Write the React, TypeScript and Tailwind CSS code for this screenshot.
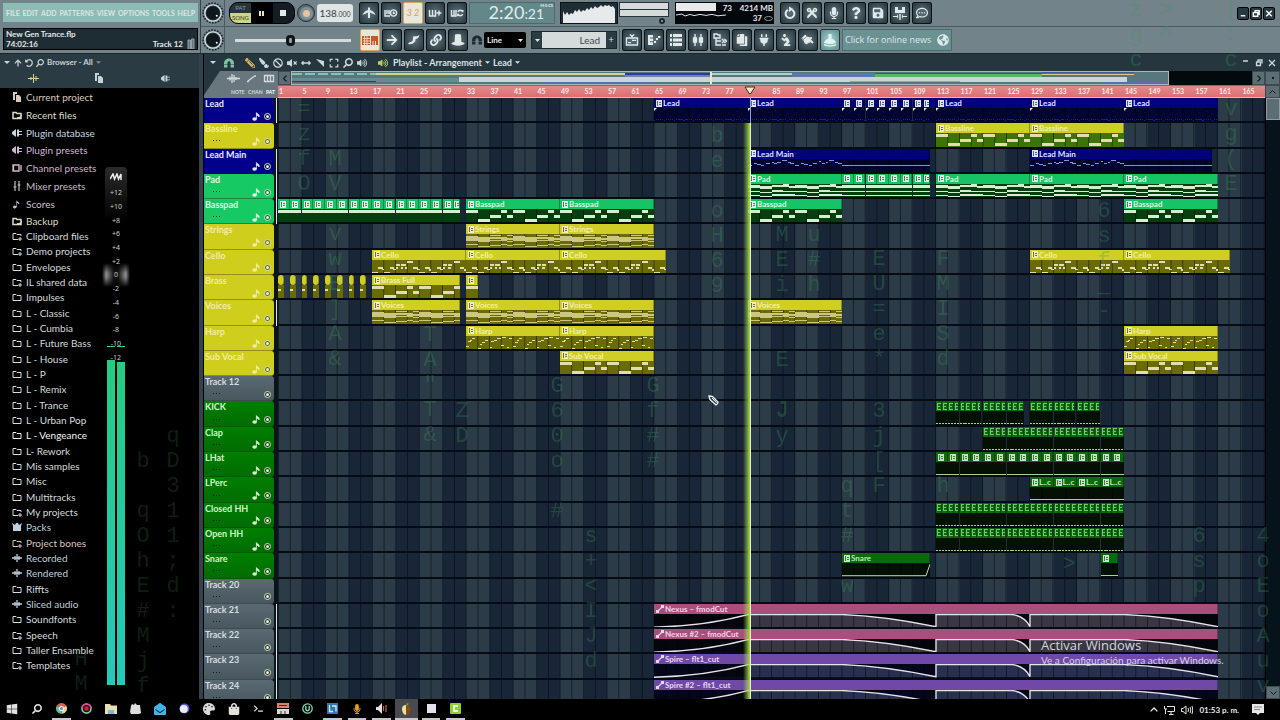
import React from "react";
import {
  FaLink, FaMagnet, FaMicrophone, FaQuestion, FaSave, FaPlug, FaCopy, FaPencilAlt, FaPaintBrush, FaBan,
  FaVolumeMute, FaArrowsAltH, FaExpand, FaSearch, FaVolumeUp, FaHandPointRight, FaGlobeAmericas, FaWindows,
  FaArrowUp, FaArrowRight, FaUndoAlt, FaCut, FaRegCommentDots,
  FaShoppingBag, FaTerminal, FaEnvelopeOpen, FaPalette, FaPray,
} from "react-icons/fa";

const BARS = 168;
const pct = (bars: number) => `${(bars / BARS) * 100}%`;

type Tone = "blue" | "yellow" | "olive" | "green" | "drum" | "gray" | "pink" | "violet";
type Art = "none" | "blocks" | "chords" | "cello" | "harp" | "pad" | "melody" | "lead" | "line" | "low" | "ticks" | "snare" | "hit" | "auto";
type Clip = { at: number; to: number; name?: string; tone: Tone; art: Art; icon?: boolean };

const run = (from: number, to: number, step: number, tone: Tone, art: Art, name?: string): Clip[] => {
  const out: Clip[] = [];
  for (let b = from; b < to; b += step) out.push({ at: b, to: Math.min(b + step, to), tone, art, name });
  return out;
};
const set = (name: string, tone: Tone, art: Art, spans: [number, number][]): Clip[] =>
  spans.map(([at, to]) => ({ at, to, name, tone, art }));

const HEAD: Record<Tone, string> = {
  blue: "bg-[#02027c] text-[#dfe2ff]",
  yellow: "bg-[#d0cd25] text-[#f2efb4]",
  olive: "bg-[#cbd026] text-[#f2efb4]",
  green: "bg-[#17c465] text-[#dcf8e2]",
  drum: "bg-[#0b6a0e] text-[#bfeabb]",
  gray: "bg-[#52626a] text-white",
  pink: "bg-[#a94e7d] text-[#f0d5e2]",
  violet: "bg-[#7048a6] text-[#e4d9f5]",
};
const BODY: Record<Tone, string> = {
  blue: "bg-[#02052f]",
  yellow: "bg-[#6a6b03]",
  olive: "bg-[#3d7404]",
  green: "bg-[#04400f]",
  drum: "bg-[#031003]",
  gray: "bg-black",
  pink: "bg-[#05060c]",
  violet: "bg-[#04061a]",
};

type Track = { name: string; tone: Tone; bar?: boolean; note?: boolean; dots?: boolean; clips: Clip[] };
const TRACKS: Track[] = [
  { name: "Lead", tone: "blue", bar: true, note: true, clips: [
    ...set("Lead", "blue", "lead", [[65, 81], [81, 97]]), ...run(97, 112, 2, "blue", "lead"),
    ...set("Lead", "blue", "lead", [[113, 129], [129, 145], [145, 161]]), { at: 112, to: 113, tone: "blue", art: "none", icon: false }] },
  { name: "Bassline", tone: "yellow", note: true, dots: true, clips: set("Bassline", "olive", "blocks", [[113, 129], [129, 145]]) },
  { name: "Lead Main", tone: "blue", bar: true, note: true, clips: set("Lead Main", "blue", "melody", [[81, 112], [129, 160]]) },
  { name: "Pad", tone: "green", bar: true, note: true, dots: true, clips: [
    ...set("Pad", "green", "pad", [[81, 97]]), ...run(97, 112, 2, "green", "pad"),
    ...set("Pad", "green", "pad", [[113, 129], [129, 145], [145, 161]])] },
  { name: "Basspad", tone: "green", bar: true, note: true, dots: true, clips: [
    ...run(1, 32, 2, "green", "line"), ...set("Basspad", "green", "blocks", [[33, 49], [49, 65], [81, 97], [145, 161]])] },
  { name: "Strings", tone: "yellow", note: true, clips: set("Strings", "yellow", "chords", [[33, 49], [49, 65]]) },
  { name: "Cello", tone: "yellow", note: true, clips: set("Cello", "yellow", "cello", [[17, 33], [33, 49], [49, 67], [129, 145], [145, 163]]) },
  { name: "Brass", tone: "yellow", note: true, clips: [
    ...[1, 3, 5, 7, 9, 11, 13, 15].map((at): Clip => ({ at, to: at + 1, tone: "yellow", art: "hit", icon: false })),
    ...set("Brass Full", "yellow", "blocks", [[17, 32]]), { at: 33, to: 35, tone: "yellow", art: "blocks" }] },
  { name: "Voices", tone: "yellow", bar: true, note: true, clips: set("Voices", "yellow", "chords", [[17, 32], [33, 49], [49, 65], [81, 97]]) },
  { name: "Harp", tone: "yellow", note: true, clips: set("Harp", "yellow", "harp", [[33, 49], [49, 65], [145, 161]]) },
  { name: "Sub Vocal", tone: "yellow", note: true, clips: set("Sub Vocal", "yellow", "blocks", [[49, 65], [145, 161]]) },
  { name: "Track 12", tone: "gray", dots: true, clips: [] },
  { name: "KICK", tone: "drum", note: true, dots: true, clips: [
    ...run(113, 120.6, 1, "drum", "ticks"), ...run(121, 128, 1, "drum", "ticks"),
    ...run(129, 136.6, 1, "drum", "ticks"), ...run(137, 141, 1, "drum", "ticks")] },
  { name: "Clap", tone: "drum", note: true, dots: true, clips: run(121, 145, 1, "drum", "ticks") },
  { name: "LHat", tone: "drum", note: true, dots: true, clips: run(113, 145, 2, "drum", "low") },
  { name: "LPerc", tone: "drum", note: true, dots: true, clips: run(129, 145, 4, "drum", "low", "L..c") },
  { name: "Closed HH", tone: "drum", note: true, dots: true, clips: run(113, 145, 1, "drum", "ticks") },
  { name: "Open HH", tone: "drum", note: true, dots: true, clips: run(113, 145, 1, "drum", "ticks") },
  { name: "Snare", tone: "drum", note: true, dots: true, clips: [
    { at: 97, to: 112, name: "Snare", tone: "drum", art: "snare" }, { at: 141, to: 144, tone: "drum", art: "low" }] },
  { name: "Track 20", tone: "gray", dots: true, clips: [] },
  { name: "Track 21", tone: "gray", bar: true, dots: true, clips: set("Nexus – fmodCut", "pink", "auto", [[65, 161]]) },
  { name: "Track 22", tone: "gray", bar: true, dots: true, clips: set("Nexus #2 – fmodCut", "pink", "auto", [[65, 161]]) },
  { name: "Track 23", tone: "gray", bar: true, dots: true, clips: set("Spire – flt1_cut", "violet", "auto", [[65, 161]]) },
  { name: "Track 24", tone: "gray", bar: true, dots: true, clips: set("Spire #2 – flt1_cut", "violet", "auto", [[65, 161]]) },
];

const TRACK_HEAD: Record<string, string> = {
  blue: "bg-[#00008a] text-[#e8eaff]",
  yellow: "bg-[#d0ce1c] text-[#f0eda6]",
  green: "bg-[#17c963] text-[#e2f7e2]",
  drum: "bg-linear-to-b from-[#007f00] to-[#016c03] text-[#d3f5cd]",
  gray: "bg-linear-to-b from-[#5a6a72] to-[#49585f] text-[#d4dee2]",
};

/* Note shapes: [start bar, length, y, height] within a 16-bar phrase, body is 14 units high. */
type Note = [number, number, number, number];
const PHRASES: Partial<Record<Art, Note[]>> = {
  blocks: [[0, 2, 1, 3], [2, 2, 11, 3], [4, 2, 6, 3], [6, 1, 1, 3], [7, 1, 6, 3], [8, 2, 1, 3], [10, 2, 11, 3], [12, 2, 6, 3], [14, 1, 1, 3], [15, 1, 6, 3]],
  chords: [[0, 2, 2, 5], [2, 2, 3, 5], [4, 2, 1, 1], [4, 2, 3, 2], [4, 2, 6, 1], [6, 1, 3, 4], [7, 1, 1, 1], [7, 1, 4, 2], [7, 1, 7, 1], [8, 2, 2, 5], [10, 2, 3, 5], [12, 2, 1, 1], [12, 2, 3, 2], [12, 2, 6, 1], [14, 1, 3, 4], [15, 1, 1, 1], [15, 1, 4, 2], [15, 1, 7, 1], [0, 2, 11, 1], [2, 2, 13, 1], [4, 2, 12, 1], [6, 1, 11, 1], [7, 1, 12, 1], [8, 2, 11, 1], [10, 2, 13, 1], [12, 2, 12, 1], [14, 1, 11, 1], [15, 1, 12, 1]],
  pad: [[0, 2, 1, 3], [2, 2, 2, 3], [4, 2, 1, 2], [6, 1, 0, 3], [7, 1, 2, 2], [8, 2, 1, 3], [10, 2, 2, 3], [12, 2, 1, 2], [14, 1, 0, 3], [15, 1, 2, 2], [0, 2, 7, 1], [2, 2, 8, 1], [4, 2, 6, 2], [6, 2, 7, 1], [8, 2, 7, 1], [10, 2, 8, 1], [12, 2, 6, 2], [14, 2, 7, 1], [0, 2, 12, 1], [2, 2, 13, 1], [4, 4, 11, 2], [8, 2, 12, 1], [10, 2, 13, 1], [12, 4, 11, 2]],
  cello: [[0, 1, 13, 1], [1, 0.8, 7, 2], [1.7, 0.4, 9, 2], [2, 1, 13, 1], [3, 0.8, 7, 2], [3.6, 0.4, 9, 2], [4, 0.8, 4, 2], [5, 0.8, 4, 2], [4, 0.4, 7, 2], [5, 0.3, 7, 2], [5.6, 0.3, 7, 2], [6, 1, 1, 2], [7, 0.8, 7, 2], [7.7, 0.4, 9, 2], [8, 1, 13, 1], [9, 0.8, 7, 2], [9.7, 0.4, 10, 2], [10, 1, 13, 1], [11, 0.7, 7, 2], [11.5, 0.5, 9, 2], [12, 0.8, 4, 2], [13, 0.7, 4, 2], [12, 0.5, 7, 2], [13, 0.4, 7, 2], [14, 1, 1, 2], [15, 0.7, 7, 2], [15.6, 0.4, 10, 2]],
  harp: [[0.3, 0.5, 5, 1], [0.6, 0.5, 4, 1], [1, 0.6, 2, 1], [2.3, 0.5, 8, 1], [2.7, 0.5, 6, 1], [3.2, 0.6, 4, 1], [4.3, 0.5, 5, 1], [4.7, 0.6, 4, 1], [5.3, 0.6, 2, 1], [6.2, 0.6, 1, 1], [7.3, 0.6, 2, 1], [8.3, 0.5, 6, 1], [8.6, 0.5, 4, 1], [9, 0.6, 2, 1], [10.3, 0.5, 8, 1], [10.7, 0.5, 6, 1], [11.2, 0.6, 4, 1], [12.3, 0.5, 5, 1], [12.7, 0.6, 4, 1], [13.3, 0.6, 2, 1], [14.2, 0.6, 1, 1], [15.3, 0.6, 2, 1], [0, 0.5, 11, 1], [2, 0.5, 13, 1], [4, 0.5, 12, 1], [6, 0.5, 10, 1], [7, 0.4, 12, 1], [8, 0.5, 11, 1], [10, 0.5, 13, 1], [12, 0.5, 12, 1], [14, 0.5, 10, 1], [15, 0.4, 12, 1]],
  melody: [[0, 0.7, 6, 1], [1, 0.6, 4, 1], [1.6, 0.6, 5, 1], [2.2, 0.6, 6, 1], [3, 0.8, 4, 1], [4, 0.5, 3, 1], [4.5, 0.5, 4, 1], [5, 0.6, 3, 1], [5.8, 0.8, 1, 1], [6.8, 0.5, 3, 1], [7.2, 0.6, 4, 1], [8, 0.7, 6, 1], [9, 0.6, 4, 1], [9.6, 0.6, 5, 1], [10.4, 0.5, 6, 1], [11, 0.8, 4, 1], [12, 0.5, 2, 1], [12.6, 0.5, 4, 1], [13.2, 0.5, 3, 1], [13.8, 0.8, 1, 1], [14.8, 0.5, 3, 1], [15.3, 0.7, 4, 1]],
};

const AUTO_CURVE = "M0 14 C6 13 11 9 16 0.6 L32 0.6 C38 2 43 7 48 13.4 L48 0.6 L61 0.6 C62.5 2 63.4 6 64 13.4 L64 0.6 L80 0.6 C86 2 91 7 96 13.4";

function ClipArt({ clip }: { clip: Clip }) {
  const len = clip.to - clip.at;
  const notes: Note[] = [];
  const phrase = PHRASES[clip.art];
  if (phrase) {
    const limit = clip.art === "melody" ? 16 : len;
    for (let base = 0; base < limit; base += 16)
      phrase.forEach(([s, l, y, h]) => {
        if (base + s < limit) notes.push([base + s, Math.min(l, len - base - s), y, h]);
      });
  }
  if (clip.art === "melody") notes.push([16, len - 16, 6, 1]);
  if (clip.art === "line") notes.push([0, len, 1, 3]);
  if (clip.art === "low") notes.push([0, len, 13, 1]);
  if (clip.art === "hit") notes.push([0, 0.5, 4, 2]);
  if (clip.art === "ticks") for (let i = 0; i < 4; i++) notes.push([i * 0.25, 0.14, 13, 1]);
  if (clip.art === "lead")
    for (let i = 0; i < len * 3; i++) {
      notes.push([i / 3, 0.2, 12 + (i % 5 === 0 ? 1 : 0), 1]);
      if (i % 4 !== 1) notes.push([i / 3, 0.25, 3 + ((i * 5) % 7), 1]);
    }
  const fill =
    clip.art === "lead" ? "#161ba6" : clip.art === "melody" ? "#7f8ff0" : clip.tone === "green" ? "#d6ecd3"
      : clip.tone === "drum" ? "#a9cf9f" : clip.art === "chords" ? "#cbc680" : "#dfddb2";
  const lines: number[] = [];
  for (let b = 2; b < len; b += 2) lines.push(b);
  return (
    <svg className="block h-full w-full" viewBox={`0 0 ${len} 14`} preserveAspectRatio="none" aria-hidden="true">
      {clip.art === "auto" && (
        <path d={`${AUTO_CURVE} L96 14 L0 14 Z`} fill={clip.tone === "pink" ? "#3b3644" : "#283050"} />
      )}
      {clip.art === "auto" && <path d="M0 14 C6 13 11 9 16 0.6 V14 Z" fill="#05060f" />}
      {clip.art !== "pad" && lines.map((b) => (
        <line key={b} x1={b} x2={b} y1="0" y2="14" stroke="#000" strokeOpacity="0.45" vectorEffect="non-scaling-stroke" />
      ))}
      <g shapeRendering="crispEdges">
        {notes.map(([x, w, y, h], i) => (
          <rect key={i} x={x} y={y} width={w} height={h} fill={fill} fillOpacity={clip.art === "lead" && y < 11 ? 0.3 : 1} />
        ))}
      </g>
      {clip.art === "snare" && (
        <path d="M0 13.4 L14.3 13.4 L15 1" fill="none" stroke="#c6dcc0" vectorEffect="non-scaling-stroke" />
      )}
      {clip.art === "auto" && (
        <path d={AUTO_CURVE} fill="none" stroke="#e6e2ea" strokeWidth="1.4" vectorEffect="non-scaling-stroke" />
      )}
    </svg>
  );
}

function ClipBadge({ kind }: { kind: "pattern" | "auto" | "tiny" }) {
  if (kind === "auto")
    return (
      <svg className="h-2 w-2 shrink-0" viewBox="0 0 8 8" aria-hidden="true">
        <path d="M1.5 6.5 L6 2" stroke="currentColor" strokeWidth="1.2" />
        <rect x="0" y="5" width="3" height="3" fill="currentColor" />
        <rect x="5" y="0" width="3" height="3" fill="currentColor" />
      </svg>
    );
  if (kind === "tiny")
    return (
      <svg className="ml-px h-[7px] w-[4px] shrink-0 text-[#74c86f]" viewBox="0 0 4 7" shapeRendering="crispEdges" aria-hidden="true">
        <path d="M0 0 H4 V1 H1 V3 H3 V4 H1 V6 H4 V7 H0 Z" fill="currentColor" />
      </svg>
    );
  return (
    <svg className="h-[7px] w-1.5 shrink-0" viewBox="0 0 6 7" shapeRendering="crispEdges" aria-hidden="true">
      <path d="M0 0 H6 V7 H0 Z" fill="currentColor" />
      <path d="M1 1 h1 v5 h-1 Z M3 2 h2 v1 h-2 Z M3 4 h2 v1 h-2 Z" fill="#000" fillOpacity="0.55" />
    </svg>
  );
}

function ClipView({ clip }: { clip: Clip }) {
  const small = clip.to - clip.at <= 1;
  const round = clip.art === "hit" ? "rounded-[3px]" : "";
  const kind = clip.art === "auto" ? "auto" : clip.art === "ticks" ? "tiny" : "pattern";
  return (
    <div className="absolute inset-y-0 flex flex-col overflow-hidden" style={{ left: pct(clip.at - 1), width: pct(clip.to - clip.at) }}>
      <div className={`flex h-[10px] shrink-0 items-center gap-px overflow-hidden border-r border-black/30 text-[8px] leading-[10px] font-bold whitespace-nowrap ${small ? "" : "pl-[2px]"} ${round} ${HEAD[clip.tone]}`}>
        {clip.icon !== false && <ClipBadge kind={kind} />}
        {clip.name && <span>{clip.name}</span>}
      </div>
      <div className={`relative min-h-0 flex-1 ${BODY[clip.tone]}`}>
        <ClipArt clip={clip} />
        {clip.art === "lead" && (
          <svg className="absolute top-0 left-0 h-1 w-1" viewBox="0 0 4 4" aria-hidden="true"><path d="M0 0 H3 L0 3 Z" fill="#e8e8ff" /></svg>
        )}
      </div>
    </div>
  );
}

function TrackRow({ track }: { track: Track }) {
  return (
    <div className="flex min-h-0">
      <div className="flex w-[74px] shrink-0 bg-[#0b141b]">
        <div className={`flex w-[70px] flex-col rounded-r-[3px] border-b border-black/30 pl-px ${TRACK_HEAD[track.tone]}`}>
          <span className="text-[9px] leading-[12px] font-bold whitespace-nowrap">{track.name}</span>
          <div className="flex flex-1 items-center pr-[3px] pl-2">
            <svg className="h-[2px] w-[7px]" viewBox="0 0 7 2" aria-hidden="true">
              {track.dots && <path d="M0 0 H1 V1 H0 Z M3 0 H4 V1 H3 Z M6 0 H7 V1 H6 Z" fill="#000" fillOpacity="0.7" />}
            </svg>
            {track.note && (
              <svg className="mr-[3px] ml-auto h-[9px] w-[9px]" viewBox="0 0 9 9" aria-hidden="true">
                <ellipse cx="2.6" cy="7" rx="2.3" ry="1.7" fill="currentColor" />
                <path d="M4.4 7 V0.6 C5 2 8 2.4 7 5 C6.6 3.6 5.4 3.4 4.6 3.2" fill="currentColor" stroke="currentColor" strokeWidth="0.8" />
              </svg>
            )}
            <button type="button" aria-label={`Mute ${track.name}`} className={`flex h-[7px] w-[7px] items-center justify-center rounded-full border border-[#d8e6c4] bg-black/50 ${track.note ? "" : "ml-auto"}`}>
              <span className="h-[3px] w-[3px] rounded-full bg-[#e8f2d8]" />
            </button>
          </div>
        </div>
        <div className={`ml-[2px] w-px ${track.bar ? "bg-[#dfe4e8]" : ""}`} />
      </div>
      <div className="relative min-w-0 flex-1 border-b-2 border-[#050b14]">
        {track.clips.map((c, i) => <ClipView key={i} clip={c} />)}
      </div>
    </div>
  );
}

function Tool({ label, children, state = "" }: { label: string; children: React.ReactNode; state?: "" | "lit" | "cream" | "teal" }) {
  const look =
    state === "cream" ? "border-[#e0a84c] bg-[#e9e6da] text-[#c8702a]"
      : state === "teal" ? "border-[#22363a] bg-[radial-gradient(#a9d3d0,#5b8d90)] text-[#dff5f2]"
        : "border-[#0a1216] bg-[radial-gradient(#5c727a,#26343b)] text-[#e2e9ea]";
  return (
    <button type="button" aria-label={label} className={`flex h-[22px] w-5 shrink-0 items-center justify-center rounded-[2px] border text-[12px] ${look}`}>
      {children}
    </button>
  );
}

function Glyph({ d, fill }: { d: string; fill?: boolean }) {
  return (
    <svg className="h-[14px] w-[14px]" viewBox="0 0 14 14" fill={fill ? "currentColor" : "none"} stroke={fill ? "none" : "currentColor"} strokeWidth="1.4" aria-hidden="true">
      <path d={d} />
    </svg>
  );
}

const TOOLS_TOP: [string, React.ReactNode, ("" | "cream")?][] = [
  ["Metronome", <Glyph d="M0.5 9 Q2 5 6 4 V1.6 H8 V4 Q12 5 13.5 9 L8 6.4 V12 H6 V6.4 Z" fill />],
  ["Wait for input", <Glyph d="M1 4 V10 H6 M3 4 V8 M5 4 V8 M6.4 7 A3 3 0 1 0 12.6 7 A3 3 0 1 0 6.4 7 M9.5 5.4 V7.2 H11" />],
  ["Countdown", <span className="text-[9px] text-[#e09a58] italic">3 2</span>, "cream"],
  ["Overdub", <Glyph d="M1.5 4 V10 H7.5 V4 M4.5 4 V10 M8.6 7 H13.4 M11 4.6 V9.4" />],
  ["Loop record", <Glyph d="M1.5 4 V10 H6 V4 M4 4 V10 M8 6 A2.4 2.4 0 0 1 12.6 6 L13 4 M12.6 8 A2.4 2.4 0 0 1 8 8 L7.6 10" />],
];
const TOOLS_MAIN: [string, React.ReactNode, ("" | "cream")?][] = [
  ["Typing keyboard", (
    <svg className="h-[12px] w-4" viewBox="0 0 16 12" aria-hidden="true">
      <path d="M0 2 H8 V11 H0 Z M9 2 H16 V11 H9 Z" fill="#c05a28" />
      <path d="M1 4.5 H8 M1 7 H8 M1 9.5 H8 M2.5 2 V11 M5 2 V11" stroke="#f0dcc4" strokeWidth="0.9" />
      <path d="M11 7 V11 M13.5 7 V11" stroke="#f6e8da" />
    </svg>
  ), "cream"],
  ["Step edit", <FaArrowRight />],
  ["Slide", <Glyph d="M1 11 C2 8.6 5 9.6 6 7 V4 C7 2.6 10 4 12.4 2 C12 5 10 6 8.6 6 C8.6 9 6 12 1 11 Z" fill />],
  ["Multilink controllers", <FaLink />],
  ["Hat", <Glyph d="M4 1.4 Q7 0.4 10 1.4 L10.4 9 Q13.6 9.4 13.6 11 Q7 14.4 0.4 11 Q0.4 9.4 3.6 9 Z" fill />],
];
const TOOLS_FILE: [string, React.ReactNode][] = [
  ["Undo", (
    <svg className="h-[14px] w-[14px]" viewBox="0 0 14 14" aria-hidden="true">
      <path d="M5 3.8 A4.4 4.4 0 1 0 9 3.8" fill="none" stroke="currentColor" strokeWidth="2" />
      <path d="M6 0.5 L10.4 3 L6 6 Z" fill="currentColor" />
    </svg>
  )],
  ["Cut", <FaCut className="rotate-90" />],
  ["Record audio", <FaMicrophone />],
  ["Help", <FaQuestion />],
  ["Save", <FaSave />],
  ["Render", <Glyph d="M2 1 H5 V4 H9 V1 H12 V7 H2 Z M0 10 H4 L5 8 V13 L4 11 H0 Z M6.3 8 H7.7 V14 H6.3 Z M9 8 L10 10 H14 V11 H10 L9 13 Z" fill />],
  ["Chat", <FaRegCommentDots />],
];
const TOOLS_VIEW: [string, React.ReactNode, ("" | "teal")?][] = [
  ["Playlist", <Glyph d="M1.5 5 H12.5 V12 H1.5 Z M3 9.6 H6 M7 7.4 H11 M5 1.5 L7 3.5 L9 1.5" />],
  ["Piano roll", <Glyph d="M1 2 H6 V4.6 H3 V5.6 H6 V8.2 H3 V9.2 H6 V12 H1 Z M7 8 H9 V10 H7 Z M9 5 H11 V7 H9 Z M11 3 H13.4 V5 H11 Z" fill />],
  ["Channel rack", <Glyph d="M1 1 H3 V4 H1 Z M4 1 H13 V4 H4 Z M1 5.5 H3 V8.5 H1 Z M4 5.5 H13 V8.5 H4 Z M1 10 H3 V13 H1 Z M4 10 H13 V13 H4 Z" fill />],
  ["Mixer", <Glyph d="M4 1 V13 M10 1 V13 M2.6 5 H5.4 V9 H2.6 Z M8.6 5 H11.4 V9 H8.6 Z" />],
  ["Browser", <Glyph d="M1 1 H4 L5 2 H7 V5 H1 Z M3 5 V12 H8 M3 8 H8 M9 6 L11 8 L9 10 M11.4 6 L13.4 8 L11.4 10 M9 12 H13" />],
  ["Project picker", <FaCopy className="-scale-x-100" />],
  ["Plugin picker", <FaPlug />],
  ["Tempo tapper", <FaPray className="-scale-x-100" />],
  ["Touch controller", <FaHandPointRight className="rotate-45" />],
  ["Downloads", <Glyph d="M5.4 1 H8.6 V6 H10 Q13 8 13 10 Q7 12 1 10 Q1 8 4 6 H5.4 Z M1 11 Q7 13.4 13 11 V12.6 Q7 14.6 1 12.6 Z" fill />, "teal"],
];

function Knob() {
  return (
    <svg className="h-[22px] w-[22px]" viewBox="0 0 20 20" aria-hidden="true">
      <circle cx="10" cy="10" r="9" fill="none" stroke="#1a2328" strokeWidth="1.4" strokeDasharray="1.5 1.2" />
      <circle cx="10" cy="10" r="7.4" fill="#2c3a41" stroke="#dbe3e4" strokeWidth="1.2" />
      <circle cx="10" cy="10" r="6" fill="#0f181c" />
      <circle cx="13.4" cy="12.4" r="0.9" fill="#fff" />
    </svg>
  );
}

function Toolbar() {
  return (
    <header className="flex h-[54px] shrink-0 border-b border-[#1b272c] bg-[#72838a]">
      <div className="flex w-[201px] shrink-0 flex-col gap-[6px] border-r border-[#33434a] p-[3px] pr-[2px]">
        <nav className="flex h-[21px] items-center justify-between bg-[#8dbcb6] px-[3px] text-[7px] font-bold text-[#dde5e2]">
          {["FILE", "EDIT", "ADD", "PATTERNS", "VIEW", "OPTIONS", "TOOLS", "HELP"].map((m) => (
            <button type="button" key={m} className="leading-[10px]">{m}</button>
          ))}
        </nav>
        <div className="flex h-[23px] justify-between border border-black bg-[#1e2c33] px-[2px] text-[8px] leading-[10px] font-bold text-[#e2e8ea]">
          <div>
            <p>New Gen Trance.flp</p>
            <p>74:02:16</p>
          </div>
          <p className="flex items-end gap-1">
            Track 12
            <svg className="h-[11px] w-2" viewBox="0 0 8 11" aria-hidden="true"><path d="M1 11 V2 H3.5 V11 M4.5 11 V1 H7 V11 Z" fill="#66777e" stroke="#92a1a7" /></svg>
          </p>
        </div>
      </div>

      <div className="flex min-w-0 flex-1 flex-col">
        <div className="flex h-[27px] items-center overflow-hidden border-b border-[#4b5b62]">
          <div className="flex h-full w-6 shrink-0 items-center justify-center border-r border-[#4b5b62]"><Knob /></div>
          <div className="ml-1 flex h-[22px] w-[66px] shrink-0 overflow-hidden rounded-[9px] border border-black bg-black">
            <button type="button" className="flex w-[21px] flex-col text-center text-[6px] leading-[8px]">
              <span className="flex w-full flex-1 items-center justify-center bg-[#29343a] text-[#86959b]">PAT</span>
              <span className="flex w-full flex-1 items-center justify-center bg-[#cdd685] text-[#30371b]">SONG</span>
            </button>
            <button type="button" aria-label="Pause" className="flex flex-1 items-center justify-center gap-px">
              <span className="h-[5px] w-[2px] bg-[#e9e7b4]" /><span className="h-[5px] w-[2px] bg-[#e9e7b4]" />
            </button>
            <button type="button" aria-label="Stop" className="flex flex-1 items-center justify-center bg-[#141d23]">
              <span className="h-[6px] w-[6px] bg-[#e6e9ea]" />
            </button>
          </div>
          <button type="button" aria-label="Record" className="ml-[2px] flex h-[18px] w-[18px] shrink-0 items-center justify-center rounded-full border border-[#222f35] bg-[#5c6f77]">
            <span className="h-[7px] w-[7px] rounded-full bg-[#e6c3a4] ring-3 ring-[#7f9298]" />
          </button>
          <div className="ml-[2px] flex h-[18px] w-9 shrink-0 items-baseline justify-center rounded-[3px] bg-[#dfe4e5] text-[10px] leading-[18px] text-[#3a454a]">
            138<span className="text-[7px]">.000</span>
          </div>
          <div className="ml-[6px] flex gap-[2px]">
            {TOOLS_TOP.map(([l, i, s]) => <Tool key={l} label={l} state={s}>{i}</Tool>)}
          </div>
          <div className="ml-[2px] flex h-[22px] w-[86px] shrink-0 items-center justify-end border border-[#4a6a6d] bg-[#64878a] pr-px text-[#dfeeee]">
            <div className="flex items-baseline">
              <span className="text-[18px] leading-[20px]">2:20</span>
              <span className="text-[14px] leading-[20px]">:21</span>
            </div>
            <span className="-ml-1 self-start text-[4px] leading-[6px] font-bold">M:S:CS</span>
          </div>
          <svg className="ml-[5px] h-[22px] w-[58px] shrink-0 border border-[#0c1418] bg-[#1f2d34]" viewBox="0 0 56 20" preserveAspectRatio="none" aria-label="Output scope">
            <path d="M2 20 V8 L4 12 L6 9 L8 12 L10 10 L12 11 L14 7 L16 9 L18 6 L20 9 L22 7 L24 8 L26 5 L28 7 L30 4 L32 6 L34 3 L36 5 L38 4 L40 2 L42 4 L44 2 L46 3 L48 2 L50 4 L52 3 L54 6 V20 Z" fill="#e6eaea" />
          </svg>
          <div className="ml-px flex h-[22px] w-[50px] shrink-0 flex-col">
            <div className="flex h-[15px] flex-col gap-px border border-[#27353b] bg-[#27353b]">
              <div className="flex-1 bg-[#d6dadb]" /><div className="flex-1 bg-[#d6dadb]" />
            </div>
            <div className="mt-px mr-1 h-[6px] w-[6px] self-end rounded-full border-2 border-[#1d292e] bg-[#8ea0a6]" />
          </div>
          <div className="ml-[6px] flex h-[22px] w-[99px] shrink-0 bg-[#04070c] p-px text-[8px] leading-[10px] font-bold text-[#e4e9ea]">
            <div className="flex w-[40px] flex-col gap-[2px]">
              <div className="h-[8px] bg-[#e8eaea]" />
              <svg className="h-[4px] w-[56px]" viewBox="0 0 56 4" aria-hidden="true"><path d="M0 2 L6 1 L9 3 L14 1.4 L18 2.6 L24 1.4 L30 2.4 L36 1.4 L42 2.8 L50 2" stroke="#dfe4e6" fill="none" /></svg>
            </div>
            <span className="w-4 text-right">73</span>
            <div className="flex flex-1 flex-col text-right">
              <span>4214 MB</span>
              <span className="flex items-center justify-end gap-[2px]">
                37
                <svg className="h-[5px] w-[9px]" viewBox="0 0 9 5" aria-hidden="true"><ellipse cx="4.5" cy="2.5" rx="4" ry="2" fill="none" stroke="#8d979b" /></svg>
              </span>
            </div>
          </div>
          <div className="ml-[6px] flex gap-[2px]">
            {TOOLS_FILE.map(([l, i]) => <Tool key={l} label={l}>{i}</Tool>)}
          </div>
          <div className="mr-[5px] ml-auto flex shrink-0 gap-px text-white">
            {[["Minimize", "M3 8 H8"], ["Restore", "M2.5 4.5 H7.5 V8.5 H2.5 Z M4.5 4 V2.5 H9 V6.5 H8"], ["Close", "M2.5 2.5 L8.5 8.5 M8.5 2.5 L2.5 8.5"]].map(([l, d]) => (
              <button type="button" key={l} aria-label={l} className="h-[13px] w-3 rounded-[2px] border border-black bg-[#2a3a42]">
                <svg className="h-full w-full" viewBox="0 0 11 11" fill="none" stroke="currentColor" strokeWidth="1.5" aria-hidden="true"><path d={d} /></svg>
              </button>
            ))}
          </div>
        </div>

        <div className="flex h-[26px] items-center overflow-hidden">
          <div className="flex h-full w-6 shrink-0 items-center justify-center border-r border-[#4b5b62]"><Knob /></div>
          <input type="range" aria-label="Main pitch" defaultValue={48}
            className="mr-[9px] ml-[10px] h-3 w-[116px] shrink-0 appearance-none bg-transparent [&::-webkit-slider-runnable-track]:h-[3px] [&::-webkit-slider-runnable-track]:bg-[#d3dadb] [&::-webkit-slider-thumb]:-mt-[4px] [&::-webkit-slider-thumb]:h-[11px] [&::-webkit-slider-thumb]:w-[9px] [&::-webkit-slider-thumb]:appearance-none [&::-webkit-slider-thumb]:rounded-[4px] [&::-webkit-slider-thumb]:border-3 [&::-webkit-slider-thumb]:border-[#0d1519] [&::-webkit-slider-thumb]:bg-[#8b9a9f]" />
          <div className="flex gap-[2px]">
            {TOOLS_MAIN.map(([l, i, s]) => <Tool key={l} label={l} state={s}>{i}</Tool>)}
          </div>
          <FaMagnet className="mr-[2px] ml-1 h-[10px] w-[10px] shrink-0 rotate-180 text-[#1b2a33]" />
          <div className="relative flex h-[16px] w-[42px] shrink-0">
            <select aria-label="Snap" className="block h-full w-full appearance-none rounded-[2px] bg-black pl-[3px] text-[8px] leading-[16px] font-bold text-[#e8ecec]">
              <option>Line</option>
            </select>
            <svg className="absolute top-[7px] right-[3px] h-[3px] w-[5px]" viewBox="0 0 5 3" aria-hidden="true"><path d="M0 0 H5 L2.5 3 Z" fill="#e8ecec" /></svg>
          </div>
          <div className="ml-[5px] flex h-[18px] w-[86px] shrink-0 border border-[#1b272c] bg-[#2b3b42] text-[#e5eaea]">
            <button type="button" aria-label="Pattern menu" className="flex w-[10px] items-center justify-center">
              <svg className="h-[3px] w-[5px]" viewBox="0 0 5 3" aria-hidden="true"><path d="M0 0 H5 L2.5 3 Z" fill="currentColor" /></svg>
            </button>
            <span className="flex-1 bg-[#d5dadb] pr-[6px] text-right text-[10px] leading-4 text-[#3e484c]">Lead</span>
            <button type="button" className="w-[10px] text-[9px] leading-4">+</button>
          </div>
          <div className="ml-[2px] flex gap-[2px] border-l border-[#4b5b62] pl-[2px]">
            {TOOLS_VIEW.map(([l, i, s]) => <Tool key={l} label={l} state={s}>{i}</Tool>)}
          </div>
          <a href="#news" className="ml-[2px] flex h-[22px] w-[110px] shrink-0 items-center justify-between border border-[#4c6b6f] bg-[#6b9193] px-[2px] font-['Open_Sans'] text-[9px] whitespace-nowrap text-[#dcebeb]">
            Click for online news <FaGlobeAmericas className="text-[12px]" />
          </a>
        </div>
      </div>
    </header>
  );
}

type Item = [string, "file" | "link" | "plug" | "chan" | "mix" | "note" | "folder" | "plus" | "pack" | "wave", string?];
const TOP_ITEMS: Item[] = [
  ["Current project", "file", "text-[#d9c9bd]"], ["Recent files", "link", "text-[#dcdcc4]"], ["Plugin database", "plug", "text-[#c3d6e2]"],
  ["Plugin presets", "plug", "text-[#d2b4d4]"], ["Channel presets", "chan", "text-[#d2b4c8]"], ["Mixer presets", "mix", "text-[#c8bcc6]"],
  ["Scores", "note", "text-[#cdbfcb]"],
];
const FOLDERS: Item[] = [
  ["Backup", "link", "text-[#dcdcc4]"], ["Clipboard files", "plus"], ["Demo projects", "plus"], ["Envelopes", "folder"], ["IL shared data", "plus"],
  ["Impulses", "folder"], ["L - Classic", "folder"], ["L - Cumbia", "folder"], ["L - Future Bass", "folder"], ["L - House", "folder"],
  ["L - P", "folder"], ["L - Remix", "folder"], ["L - Trance", "folder"], ["L - Urban Pop", "folder"], ["L - Vengeance", "folder", "text-[#f2f6f6]"],
  ["L- Rework", "folder"], ["Mis samples", "folder"], ["Misc", "folder"], ["Multitracks", "folder"], ["My projects", "plus"], ["Packs", "pack", "text-[#bfd0dc]"],
  ["Project bones", "plus", "text-[#dcc4bc]"], ["Recorded", "wave", "text-[#bfd0dc]"], ["Rendered", "wave", "text-[#bfd0dc]"], ["Riffts", "folder"],
  ["Sliced audio", "wave", "text-[#bfd0dc]"], ["Soundfonts", "folder"], ["Speech", "plus"], ["Taller Ensamble", "folder"], ["Templates", "plus"],
];
const FOLDER = "M1 2.5 H4 L5 3.5 H9 V8.5 H1 Z";
const ITEM_ICON: Record<Item[1], React.ReactNode> = {
  file: <path d="M1 0 H5 V2 H3 V8 H1 Z M4 3 H7 L9 5 V10 H4 Z" fill="currentColor" stroke="none" />,
  link: <path d={`${FOLDER} M5 8 C8 8 9.4 7.4 9.4 5`} strokeWidth="1.5" />,
  plug: <path d="M0 4 L4 1 V9 L0 6 Z M5 1.6 H7 V8.4 H5 Z M7 3 H10 V4 H7 Z M7 6 H10 V7 H7 Z" fill="currentColor" stroke="none" />,
  chan: <path d="M1 2 H7 V8 H1 Z M9 2 V8 M1.5 2 V8" strokeWidth="1.4" />,
  mix: <path d="M3 0 V10 M7 0 V10 M1.5 6 H4.5 M5.5 4 H8.5" strokeWidth="1.2" />,
  note: <path d="M3 9.4 A1.7 1.5 0 1 1 4.4 8 V1 C5 3 8 3 7 5.6 C6 4 5.4 4 5 4 V8 Z" fill="currentColor" stroke="none" />,
  folder: <path d={FOLDER} />,
  plus: <path d="M6 8.5 H1 V2.5 H4 L5 3.5 H9 V5 M8 6 V10 M6 8 H10" />,
  pack: <path d="M0 1 L3 3 L4 1 H6 L7 3 L10 1 L9 4 V9 H1 V4 Z" fill="currentColor" stroke="none" />,
  wave: <path d="M0 5 H10 M3 3 V7 M5 1 V9 M7 3 V7" strokeWidth="1.3" />,
};

function BrowserItem({ item: [name, icon, color] }: { item: Item }) {
  return (
    <li className="flex items-center">
      <a href="#browse" className={`flex items-center gap-1 text-[10px] leading-[12px] ${color ?? "text-[#d3dbdd]"}`}>
        <svg className="h-[10px] w-[10px]" viewBox="0 0 10 10" fill="none" stroke="currentColor" aria-hidden="true">{ITEM_ICON[icon]}</svg>
        {name}
      </a>
    </li>
  );
}

const DB = ["+12", "+10", "+8", "+6", "+4", "+2", "0", "-2", "-4", "-6", "-8", "-10", "-12"];

function Browser() {
  return (
    <aside className="relative flex w-[199px] shrink-0 flex-col overflow-hidden bg-black">
      <div className="flex h-[34px] shrink-0 flex-col bg-[#2b3b43] pt-[3px] text-[#c9d3d6]">
        <div className="flex items-center gap-[3px] pl-[4px] text-[8px] leading-[11px] font-bold">
          <svg className="h-[3px] w-[6px]" viewBox="0 0 6 3" aria-hidden="true"><path d="M0 0 H6 L3 3 Z" fill="currentColor" /></svg>
          <FaArrowUp className="ml-px" /> <FaUndoAlt /> <FaSearch className="-scale-x-100" /> Browser - All
          <svg className="h-[3px] w-[5px]" viewBox="0 0 6 3" aria-hidden="true"><path d="M0 0 H6 L3 3 Z" fill="#829095" /></svg>
        </div>
        <div className="grid flex-1 grid-cols-3 items-center justify-items-center text-[9px]">
          <svg className="h-[9px] w-[11px] text-[#dbd58e]" viewBox="0 0 11 9" stroke="currentColor" aria-hidden="true"><path d="M0 4.5 H11 M3 3 V6 M5.5 0 V9 M8 2 V7" /></svg>
          <svg className="h-[10px] w-[10px]" viewBox="0 0 10 10" aria-hidden="true">{ITEM_ICON.file}</svg>
          <svg className="h-[9px] w-[11px]" viewBox="0 0 10 10" aria-hidden="true">{ITEM_ICON.plug}</svg>
        </div>
      </div>
      <ul className="grid h-[125px] shrink-0 auto-rows-fr pl-3">
        {TOP_ITEMS.map((i) => <BrowserItem key={i[0]} item={i} />)}
      </ul>
      <ul className="grid h-[460px] shrink-0 auto-rows-fr pl-3">
        {FOLDERS.map((i) => <BrowserItem key={i[0]} item={i} />)}
      </ul>
      <div className="absolute top-[113px] left-[102px] flex w-7 flex-col items-center">
        <div className="absolute top-0 h-[54px] w-[22px] rounded-t bg-linear-to-b from-[#2b2b2b] to-transparent" />
        <div className="absolute top-[96px] h-6 w-7 bg-[linear-gradient(to_right,transparent,#cfcfcf_15%,#1c1c1c_42%,#1c1c1c_58%,#cfcfcf_85%,transparent)] mask-y-from-40%" />
        <svg className="relative mt-[6px] h-2 w-3" viewBox="0 0 12 8" aria-hidden="true"><path d="M0 6 L3 1 L4.5 6 L7 1 L8.5 6 L11 1 V7" fill="none" stroke="#eee" strokeWidth="1.5" /></svg>
        <div className="relative mt-[5px] grid h-[178px] auto-rows-fr items-center text-center font-['Noto_Sans'] text-[7px] leading-[9px] text-[#c9cccd]">
          {DB.map((d) => <span key={d}>{d}</span>)}
        </div>
        <div className="absolute top-[179px] flex w-[18px] justify-between">
          <div className="h-px w-[8px] bg-[#36d38d]" />
          <div className="h-px w-[8px] bg-[#36d38d]" />
        </div>
        <div className="absolute top-[193px] flex h-[325px] w-[18px] items-end justify-between">
          <div className="h-[325px] w-[8px] bg-linear-to-b from-[#26cc82] to-[#24cabb]" />
          <div className="h-[323px] w-[8px] bg-linear-to-b from-[#26cc82] to-[#24cabb]" />
        </div>
      </div>
    </aside>
  );
}

const RULER = Array.from({ length: 42 }, (_, i) => i * 4 + 1);

function Playlist() {
  return (
    <main className="flex min-w-0 flex-1 flex-col overflow-hidden bg-[#26363e]">
      <div className="flex h-[17px] shrink-0 items-center gap-[4px] px-1 text-[10px] text-[#cdd6d8]">
        <svg className="mx-[2px] h-[3px] w-[6px]" viewBox="0 0 6 3" aria-hidden="true"><path d="M0 0 H6 L3 3 Z" fill="currentColor" /></svg>
        <FaMagnet className="mr-[7px] ml-[2px] rotate-180 text-[#7fc3a2]" />
        <FaPencilAlt className="-scale-x-100 text-[#e0b769]" />
        <FaPaintBrush className="-scale-x-100" />
        <FaBan /><FaVolumeMute /><FaArrowsAltH />
        <svg className="h-[10px] w-[10px]" viewBox="0 0 10 10" aria-hidden="true"><path d="M1 1 L9 3 V9 Z" fill="currentColor" /></svg>
        <FaExpand /><FaSearch className="-scale-x-100" /><FaVolumeUp />
        <FaVolumeUp className="ml-[7px] text-[#b9cf63]" />
        <h1 className="flex items-center gap-[3px] pl-px text-[9px] font-bold whitespace-nowrap text-[#dce3e5]">
          Playlist - Arrangement
          <svg className="h-[3px] w-[5px]" viewBox="0 0 6 3" aria-hidden="true"><path d="M0 0 H6 L3 3 Z" fill="currentColor" /></svg>
          Lead
          <svg className="h-[3px] w-[5px]" viewBox="0 0 6 3" aria-hidden="true"><path d="M0 0 H6 L3 3 Z" fill="currentColor" /></svg>
        </h1>
        <svg className="ml-auto h-[9px] w-[36px]" viewBox="0 0 36 9" fill="none" stroke="currentColor" strokeWidth="1.3" aria-hidden="true">
          <path d="M3 3 H8 M16.5 4 H20.5 V7.5 H16.5 Z M18 3.5 V2 H22 V5.5 M29 2 L35 8 M35 2 L29 8" />
        </svg>
      </div>

      <div className="flex h-[27px] shrink-0">
        <div className="flex w-[74px] shrink-0 flex-col justify-between bg-[#68777e] pt-[3px] pb-[3px] pl-[20px] text-[#d3dadc] [clip-path:polygon(16px_0,100%_0,100%_100%,0_100%,0_24px)]">
          <svg className="h-[9px] w-[52px]" viewBox="0 0 52 9" fill="none" stroke="currentColor" aria-hidden="true">
            <path d="M3 4.5 H16 M6 2.5 V6.5 M8 0 V9 M10 1 V8 M12 3 V6 M23 7.5 H25 M24 7 L30 2.5 M30 2 H32 M40.5 1.5 H49.5 V7.5 H40.5 Z M43.5 2 V7 M46.5 2 V7" strokeWidth="1.3" />
          </svg>
          <div className="flex justify-between pr-[3px] pl-[7px] text-[5px] leading-[6px] font-bold">
            <span>NOTE</span><span>CHAN</span><span className="text-white">PAT</span>
          </div>
        </div>
        <div className="flex min-w-0 flex-1 flex-col">
          <div className="flex h-[14px] bg-[#03090c]">
            <button type="button" aria-label="Scroll left" className="flex w-[13px] items-center justify-center border border-[#3c4b52] bg-[#5d6d74] text-[#121b20]">
              <svg className="h-[7px] w-1" viewBox="0 0 4 7" fill="none" stroke="currentColor" strokeWidth="1.2" aria-hidden="true"><path d="M3.5 0.5 L0.5 3.5 L3.5 6.5" /></svg>
            </button>
            <svg className="h-full w-[89%] border border-[#a9b6b9] bg-[#57767d]" viewBox="0 0 879 14" preserveAspectRatio="none" shapeRendering="crispEdges" aria-label="Song overview">
              <path d="M0 2 H84" stroke="#7fc5b0" strokeWidth="2" strokeDasharray="10 3" />
              <rect x="84" y="1" width="250" height="2" fill="#cfd58a" />
              <rect x="334" y="1" width="85" height="4" fill="#2c3c9c" /><rect x="334" y="3" width="85" height="4" fill="#6b86a8" />
              <rect x="419" y="1" width="82" height="3" fill="#a4d6cf" /><rect x="501" y="1" width="84" height="5" fill="#5a79b0" />
              <rect x="585" y="2" width="167" height="4" fill="#59b85a" /><rect x="585" y="1" width="167" height="1" fill="#3c50a0" />
              <rect x="752" y="2" width="92" height="2" fill="#d6cd86" /><rect x="752" y="0" width="92" height="1" fill="#4157a5" />
              <rect x="0" y="7" width="167" height="5" fill="#6a8a90" /><rect x="167" y="6" width="670" height="6" fill="#cdd3d6" />
              <rect x="0" y="11" width="84" height="1" fill="#1c4b4e" /><rect x="250" y="12" width="110" height="1" fill="#5e70a8" />
              <rect x="560" y="11" width="110" height="1" fill="#8f9fc0" /><rect x="812" y="12" width="60" height="1" fill="#5e70a8" />
              <rect x="419" y="0" width="2" height="14" fill="#e2ecb4" />
            </svg>
            <button type="button" aria-label="Scroll right" className="ml-auto flex w-[13px] items-center justify-center border border-[#3c4b52] bg-[#5d6d74] text-[#121b20]">
              <svg className="h-[7px] w-1" viewBox="0 0 4 7" fill="none" stroke="currentColor" strokeWidth="1.2" aria-hidden="true"><path d="M0.5 0.5 L3.5 3.5 L0.5 6.5" /></svg>
            </button>
          </div>
          <div className="relative h-[13px] overflow-hidden border-t border-b border-t-[#a65c5f] border-b-[#efb4b0] bg-linear-to-b from-[#e3898a] to-[#dc6f72] text-[7px] leading-[11px] font-bold text-[#fbeceb]">
            {RULER.filter((b) => b !== 81).map((b) => (
              <span key={b} className="absolute top-0 pl-px" style={{ left: pct(b - 1) }}>{b}</span>
            ))}
            <svg className="absolute top-0 -ml-[6px] h-[9px] w-3" style={{ left: pct(80.3) }} viewBox="0 0 12 9" aria-hidden="true">
              <path d="M1 1 H11 L6.4 8 H5.6 Z" fill="#f2efd2" stroke="#3d2c20" />
            </svg>
          </div>
        </div>
        <div className="flex w-[15px] shrink-0 flex-col bg-[#5d6d74] text-[#121b20]">
          <div className="flex h-[14px] items-center justify-center border border-[#3c4b52]"><span className="h-[2px] w-[2px] bg-current" /></div>
          <button type="button" aria-label="Scroll up" className="flex h-[13px] items-center justify-center border border-[#3c4b52]">
            <svg className="h-1 w-[7px]" viewBox="0 0 7 4" fill="none" stroke="currentColor" aria-hidden="true"><path d="M0.5 3.5 L3.5 0.5 L6.5 3.5" /></svg>
          </button>
        </div>
      </div>

      <div className="flex min-h-0 flex-1">
        <div className="relative min-w-0 flex-1 overflow-hidden">
          <div className="absolute inset-y-0 right-0 left-[74px] bg-[#182637] bg-[linear-gradient(to_right,rgba(3,8,16,.55)_1px,transparent_1px),linear-gradient(to_right,#2c3b48_50%,#182637_50%)] bg-[size:1.190476%_100%,4.761905%_100%]" />
          <div className="relative grid h-[607px] auto-rows-fr">
            {TRACKS.map((t) => <TrackRow key={t.name} track={t} />)}
          </div>
          <div className="pointer-events-none absolute inset-y-0 right-0 left-[74px]">
            <div className="absolute top-[25px] bottom-0 -ml-[7px] w-2 border-r border-[#e6f3c8] bg-linear-to-r from-transparent to-[#a6d84e]" style={{ left: pct(80.3) }} />
            <div className="absolute top-0 h-[25px] w-px bg-[#8f9fd8]" style={{ left: pct(80.3) }} />
            <svg className="absolute top-[297px] h-[11px] w-[11px]" style={{ left: pct(73.2) }} viewBox="0 0 11 11" aria-hidden="true">
              <path d="M1 1 L4.4 1.4 L10 7 Q10 9 8 10 L1.8 4.4 Z" fill="#3a4750" stroke="#eef2f2" strokeWidth="1.3" />
              <path d="M4 3 L8.6 7.6" stroke="#eef2f2" />
            </svg>
          </div>
        </div>
        <div className="flex w-[15px] shrink-0 flex-col justify-between border-l border-black bg-[#07131a]">
          <div className="h-[22px] border border-[#8d9ca2] bg-[#5d6d74]" />
          <button type="button" aria-label="Scroll down" className="flex h-[13px] items-center justify-center border border-[#3c4b52] bg-[#5d6d74] text-[#121b20]">
            <svg className="h-1 w-[7px]" viewBox="0 0 7 4" fill="none" stroke="currentColor" aria-hidden="true"><path d="M0.5 0.5 L3.5 3.5 L6.5 0.5" /></svg>
          </button>
        </div>
      </div>
    </main>
  );
}

const APPS: [string, React.ReactNode, boolean?][] = [
  ["Start", <FaWindows className="text-[#dfe3e5]" />],
  ["Search", <FaSearch className="-scale-x-100 text-[10px] text-[#dfe3e5]" />],
  ["Chrome", <svg className="h-[11px] w-[11px]" viewBox="0 0 12 12"><path d="M6 6 L0.8 3 A6 6 0 0 1 11.2 3 Z" fill="#e0604c" /><path d="M6 6 L11.2 3 A6 6 0 0 1 6 12 Z" fill="#ecd48c" /><path d="M6 6 L6 12 A6 6 0 0 1 0.8 3 Z" fill="#5fc08a" /><circle cx="6" cy="6" r="2.8" fill="#eef2f6" /><circle cx="6" cy="6" r="1.7" fill="#5f92dc" /></svg>, true],
  ["Recorder", <svg className="h-[11px] w-[11px]" viewBox="0 0 11 11"><circle cx="5.5" cy="5.5" r="4.5" fill="#2a0a12" stroke="#7fd0c0" strokeWidth="1.6" /><path d="M1 5.5 A4.5 4.5 0 0 1 10 5.5" fill="none" stroke="#e04a9a" strokeWidth="1.6" /><circle cx="5.5" cy="5.5" r="2.2" fill="#e02020" /></svg>],
  ["Explorer", <svg className="h-[10px] w-3" viewBox="0 0 12 10"><path d="M0 0 H5 L6 1.5 H12 V10 H0 Z" fill="#e6dfae" /><path d="M3 6 H9 V10 H3 Z" fill="#7fb8d8" /></svg>],
  ["Notes", <svg className="h-[11px] w-[11px]" viewBox="0 0 11 11"><path d="M2 1 L4 2 L5 0 L7 2 H10 L11 10 L9 11 H1 L0 9 L1 3 Z" fill="#dedede" /></svg>],
  ["Mail", <FaEnvelopeOpen className="text-[#3fb6e6]" />],
  ["Cortana", <svg className="h-[11px] w-[11px]" viewBox="0 0 11 11"><circle cx="5.5" cy="5.5" r="5" fill="#5b58d6" /><circle cx="4.8" cy="6" r="4" fill="#eceaff" /></svg>],
  ["Paint", <FaPalette className="text-[#d9d9d9]" />],
  ["Store", <FaShoppingBag className="text-[#e4e2da]" />],
  ["Terminal", <FaTerminal className="text-[9px] text-[#e4e4e4]" />],
  ["Mixer panel", <svg className="h-[11px] w-3" viewBox="0 0 12 11"><path d="M0 0 H12 V5 H0 Z" fill="#d98070" /><path d="M0 6 H12 V11 H0 Z" fill="#d8d8d8" /><path d="M2 2.5 H10 M4 8 V11 M8 8 V11" stroke="#4a2a2a" /></svg>, true],
  ["U", <svg className="h-[11px] w-[11px]" viewBox="0 0 11 11" fill="none"><circle cx="5.5" cy="5.5" r="4.7" stroke="#7fd8b6" strokeWidth="1.3" /><path d="M3.8 3 V6 A1.7 1.7 0 0 0 7.2 6 V3" stroke="#7fd8b6" strokeWidth="1.4" /></svg>],
  ["LT", <svg className="h-[11px] w-[11px]" viewBox="0 0 11 11"><rect width="11" height="11" fill="#2f78b4" /><path d="M2.5 2 V8.5 H6 M5 3 H9 V8.5" fill="none" stroke="#d8ecf8" strokeWidth="1.3" /></svg>, true],
  ["Voice", <FaMicrophone className="text-[10px] text-[#e3a01e]" />, true],
  ["Sound", <svg className="h-[11px] w-[11px]" viewBox="0 0 11 11"><path d="M0 4 H2 L6 0 V11 L2 7 H0 Z" fill="#e2e2e2" /><path d="M7.5 3 V8 M10 2 V9" stroke="#c8702a" strokeWidth="1.2" /></svg>, true],
  ["FL", <svg className="h-3 w-[10px]" viewBox="0 0 10 12"><path d="M5 2 C9 2 10 5 9 8 C8 11 6 12 5 12 C3 12 1 9 1 6 C1 3 3 2 5 2 Z" fill="#8a4a16" /><path d="M5 2 C2 2 1 4 1 6 C1 9 3 12 5 12 Z" fill="#e6e39a" /><path d="M5 3 L6 0 L8 1 Z" fill="#6fb23c" /></svg>, true],
  ["Document", <span className="h-[9px] w-[9px] bg-[#dfe3ec]" />, true],
  ["Camtasia", <svg className="h-[11px] w-[11px]" viewBox="0 0 11 11"><rect width="11" height="11" rx="1" fill="#8ed12c" /><path d="M8 3 H4 V8 H8" fill="none" stroke="#f1fae0" strokeWidth="1.8" /></svg>, true],
];

function Taskbar() {
  return (
    <footer className="flex h-[21px] shrink-0 items-stretch bg-black text-[#e6e6e6]">
      <div className="grid w-[468px] grid-cols-[repeat(19,minmax(0,1fr))]">
        {APPS.map(([l, icon, open]) => (
          <button type="button" key={l} aria-label={l} className={`flex items-center justify-center border-b-2 text-[12px] ${open ? "border-[#c8c8c8]" : "border-transparent"} ${l === "FL" ? "mx-px bg-[#4a4a4e]" : "mx-[3px]"}`}>
            {icon}
          </button>
        ))}
      </div>
      <div className="ml-auto flex items-center gap-[6px] pr-4">
        <svg className="h-[5px] w-2" viewBox="0 0 8 5" fill="none" stroke="currentColor" strokeWidth="1.3" aria-hidden="true"><path d="M0.6 4.4 L4 1 L7.4 4.4" /></svg>
        <svg className="h-[10px] w-[11px]" viewBox="0 0 11 10" fill="none" stroke="currentColor" aria-hidden="true"><path d="M3 1.5 H10.5 V6.5 H3.5 M7 7 V9 M5 9.5 H9.5 M0.5 1 V4 H3 M1.5 4 V9" /></svg>
        <svg className="h-[10px] w-3" viewBox="0 0 12 10" fill="none" stroke="currentColor" aria-hidden="true"><path d="M0.5 3.5 H2 L5 1 V9 L2 6.5 H0.5 Z M7 3 Q8 5 7 7 M9 2 Q10.6 5 9 8 M11 1 Q12.6 5 11 9" /></svg>
        <span className="text-[8px] font-bold">01:53 p. m.</span>
        <svg className="ml-[7px] h-[11px] w-3" viewBox="0 0 12 11" aria-hidden="true"><path d="M0 0 H12 V9 H8 L6 11 L4 9 H0 Z" fill="#e6e6e6" /><path d="M2 3 H10 M2 5.5 H8" stroke="#8a8a8a" /></svg>
      </div>
    </footer>
  );
}

/* Falling glyph columns: x, first row y, characters spaced one row apart. */
const RAIN: [number, number, string][] = [
  [303, 110, "=zfO"], [334, 160, "MV vwE]A&"], [429, 336, "TA\"T&"], [461, 412, "ZD"], [556, 387, "G60o #"],
  [590, 537, "s+<IJd"], [652, 387, "Gf##"], [716, 137, "be oH69"], [781, 236, "MEi  E J"],
  [781, 412, "Jy"], [813, 236, "u#h"], [846, 487, "qt# w"], [878, 412, "3j[F"], [878, 260, "EU=e*"],
  [942, 260, "FMISd"], [942, 487, "h"], [1068, 565, ">"], [1135, 11, "zgc"], [1165, 11, ">^"], [1230, 11, "|:c"],
  [1230, 110, "vg(E"], [1103, 212, "6sf_-"], [1198, 537, "6sp"], [1262, 537, "4oEoAuv"],
];
const DIM_RAIN: [number, number, string][] = [
  [142, 462, "b qOhE#Mjf"], [172, 437, "qD311;d:"], [80, 660, "HM"],
];

function RainColumns({ columns }: { columns: [number, number, string][] }) {
  return columns.map(([x, y, chars], i) => (
    <div key={i} className="absolute -ml-[7px] w-4 text-center whitespace-pre" style={{ left: `${(x / 1280) * 100}%`, top: y - 13 }}>
      {chars.split("").map((c, j) => <div key={j} className="h-[25px]">{c}</div>)}
    </div>
  ));
}

function GlyphRain() {
  return (
    <div aria-hidden="true" className="pointer-events-none absolute inset-0 overflow-hidden font-['Liberation_Mono'] text-[22px] leading-[25px] text-[#3f9a58]">
      <div className="opacity-30"><RainColumns columns={RAIN} /></div>
      <div className="opacity-20"><RainColumns columns={DIM_RAIN} /></div>
    </div>
  );
}

export default function App() {
  return (
    <div className="relative flex h-screen flex-col overflow-hidden bg-black font-['Lato','Liberation_Sans',sans-serif]">
      <Toolbar />
      <div className="flex min-h-0 flex-1">
        <Browser />
        <div className="w-[5px] shrink-0 border-r border-black bg-[#33434b]" />
        <Playlist />
      </div>
      <Taskbar />
      <GlyphRain />
      <div className="pointer-events-none absolute right-[54px] bottom-[53px] w-[185px] text-[#d3d6dc]">
        <p className="font-['Open_Sans'] text-[13px] leading-[16px]">Activar Windows</p>
        <p className="text-[10px] leading-[14px] whitespace-nowrap">Ve a Configuración para activar Windows.</p>
      </div>
    </div>
  );
}
